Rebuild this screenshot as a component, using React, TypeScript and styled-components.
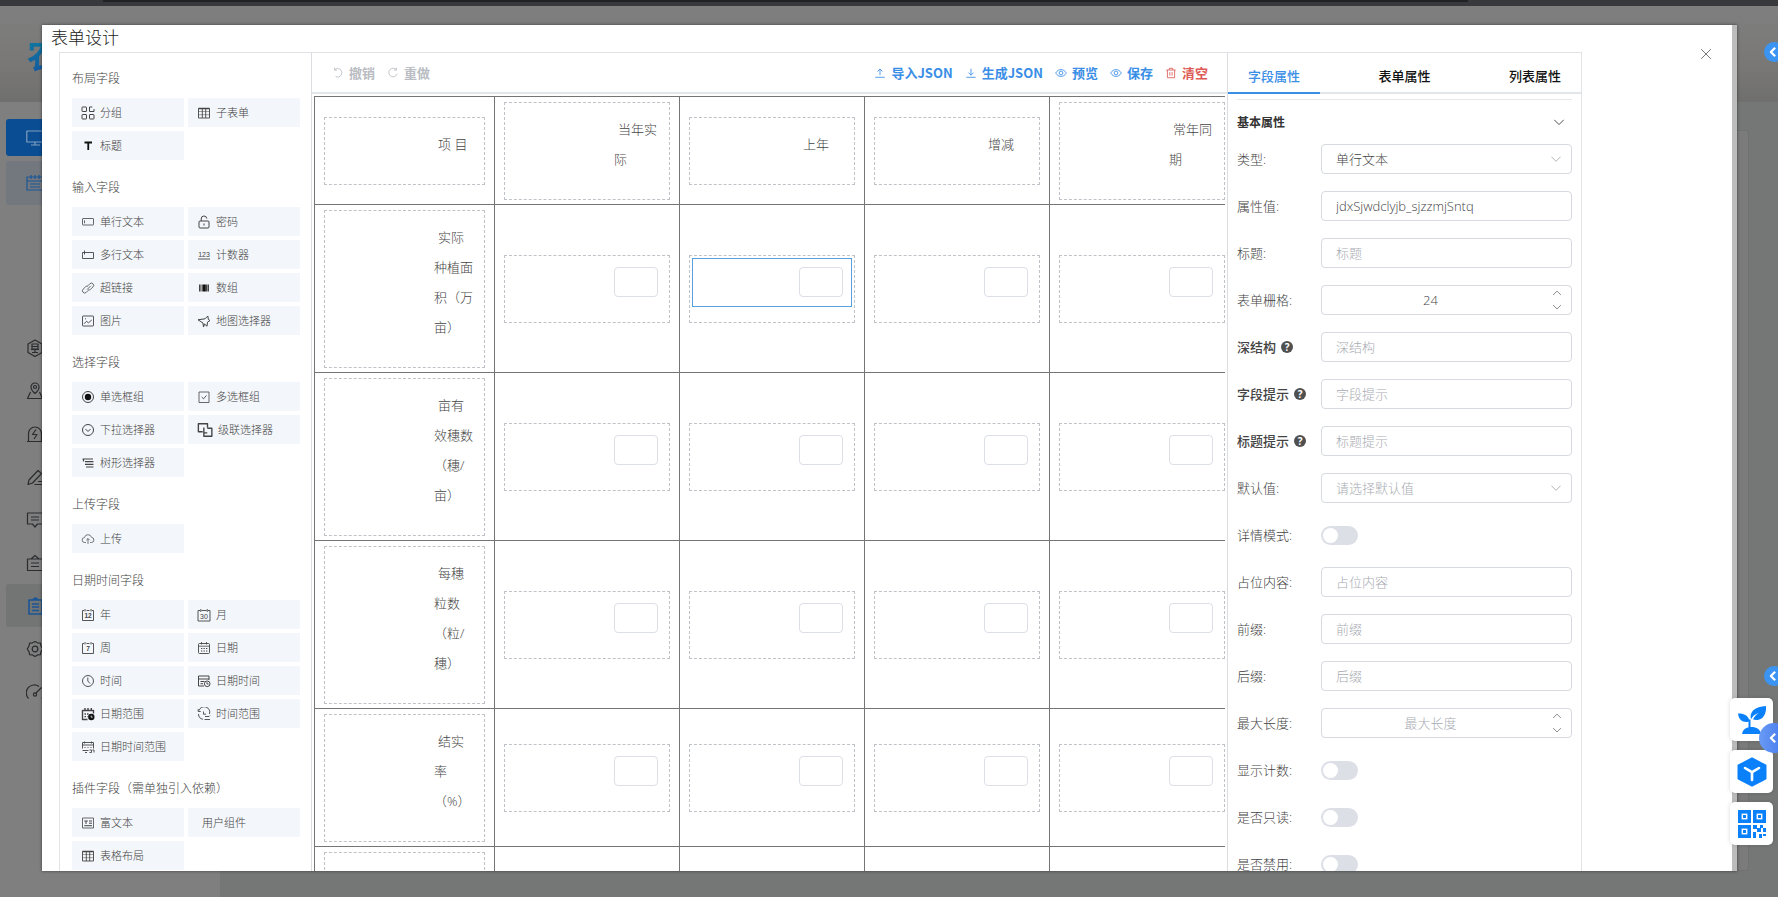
import React, { useState } from 'react';
import styled, { createGlobalStyle } from 'styled-components';

const BLUE = '#3a8ee6';

const GlobalStyle = createGlobalStyle`
  *, *::before, *::after { box-sizing: border-box; }
  html, body { margin: 0; height: 100%; overflow: hidden; background: #fff; }
  body, button, input, select {
    font-family: "Open Sans", "Noto Sans CJK SC", sans-serif;
    font-weight: 300;
  }
  button { border: 0; padding: 0; background: none; cursor: pointer; }
`;

/* ---------- dimmed page behind the dialog ---------- */

const Screen = styled.div`
  position: relative;
  height: 100vh;
  padding-bottom: 2px;
  overflow: hidden;
`;
const Backdrop = styled.div`
  display: flex;
  flex-direction: column;
  height: 100%;
  background: #757777;
`;
const BrowserStrip = styled.div`
  height: 6px;
  flex: none;
  padding: 0 310px 0 103px;
  background: #38393d;
  &::before { content: ''; display: block; height: 2px; background: #202226; }
`;
const Banner = styled.header`
  height: 96px;
  flex: none;
  padding: 29px 0 0 27px;
  background: linear-gradient(#7f7f7f, #797877 60%, #6f6f6d);
`;
const Brand = styled.span`
  font-size: 34px;
  line-height: 40px;
  font-weight: 700;
  color: transparent;
  background: linear-gradient(#0c7fa0, #17569f);
  background-clip: text;
`;
const BackBody = styled.div`
  display: flex;
  flex: 1;
  min-height: 0;
`;
const SideNav = styled.nav`
  width: 220px;
  padding: 17px 6px 0;
  background: #7f7f7f;
`;
const NavTile = styled.div<{ $tone?: 'primary' | 'sub' | 'active'; $h?: number }>`
  display: flex;
  align-items: center;
  height: ${p => p.$h ?? 43}px;
  padding-left: 20px;
  border-radius: 3px;
  color: ${p => (p.$tone === 'primary' ? '#7f9fc0' : p.$tone ? '#1b5697' : '#2b2c2e')};
  background: ${p =>
    p.$tone === 'primary' ? '#0b4d92' : p.$tone === 'sub' ? '#73787e' : p.$tone === 'active' ? '#727574' : 'none'};
`;
const NavGap = styled.div<{ $h: number }>`
  height: ${p => p.$h}px;
`;
const BackMain = styled.div`
  flex: 1;
  padding: 28px 29px 26px 20px;
  background: #757777;
`;
const BackCard = styled.div`
  height: 100%;
  border: 1px solid #707171;
  border-radius: 3px;
  background: #7b7b7b;
`;

/* ---------- dialog ---------- */

const Overlay = styled.div`
  position: absolute;
  inset: 0;
  padding: 25px 41px 28px 42px;
`;
const Dialog = styled.section`
  position: relative;
  display: flex;
  flex-direction: column;
  height: 100%;
  overflow: hidden;
  background: #fff;
  border-right: 5px solid #bcbcbc;
  box-shadow: 0 0 3px rgba(0, 0, 0, 0.5);
`;
const DialogTitle = styled.h1`
  flex: none;
  height: 27px;
  margin: 0;
  padding-left: 9px;
  font-size: 17px;
  line-height: 26px;
  font-weight: 300;
  color: #222;
`;
const CloseButton = styled.button`
  position: absolute;
  top: 22px;
  right: 19px;
  width: 14px;
  height: 14px;
  color: #777;
`;
const Editor = styled.div`
  display: flex;
  flex: 1;
  min-height: 0;
  margin: 0 150px 0 17px;
  border: 1px solid #e2e3e6;
  border-bottom: 0;
`;

/* ---------- field palette ---------- */

const Palette = styled.aside`
  flex: none;
  width: 252px;
  padding: 17px 11px 0 12px;
  overflow: hidden;
  border-right: 1px solid #dcdde0;
`;
const PaletteSection = styled.section`
  margin-bottom: 19px;
`;
const PaletteHeading = styled.h2`
  margin: 0 0 10px;
  font-size: 12px;
  line-height: 18px;
  font-weight: 300;
  white-space: nowrap;
  color: #444;
`;
const TileGrid = styled.div`
  display: grid;
  grid-template-columns: 1fr 1fr;
  grid-auto-rows: 29px;
  gap: 4px;
`;
const Tile = styled.button<{ $plain?: boolean }>`
  display: flex;
  align-items: center;
  gap: 5px;
  padding-left: ${p => (p.$plain ? 14 : 9)}px;
  font-size: 11px;
  line-height: 16px;
  white-space: nowrap;
  color: #444;
  background: #f3f6fa;
`;

/* ---------- canvas ---------- */

const Center = styled.main`
  display: flex;
  flex-direction: column;
  flex: 1;
  min-width: 0;
`;
const Toolbar = styled.div`
  display: flex;
  align-items: center;
  gap: 12px;
  flex: none;
  height: 41px;
  padding: 0 19px 0 20px;
  border-bottom: 2px solid #e4e7ea;
`;
const Spacer = styled.div`
  flex: 1;
`;
const ToolButton = styled.button<{ $color: string }>`
  display: flex;
  align-items: center;
  gap: 5px;
  font-family: "Noto Sans CJK SC", sans-serif;
  font-size: 13px;
  line-height: 20px;
  font-weight: 600;
  white-space: nowrap;
  color: ${p => p.$color};
`;
const Canvas = styled.div`
  flex: 1;
  min-height: 0;
  margin: 2px 2px 0;
  overflow: hidden;
`;
const FormTable = styled.table`
  width: 921px;
  table-layout: fixed;
  border-collapse: collapse;
`;
const FirstCol = styled.col`
  width: 180px;
`;
const Cell = styled.td`
  padding: 5px 9px 4px;
  border: 1px solid #757575;
  vertical-align: middle;
`;
const DropZone = styled.div`
  padding: 2px 2px 15px;
  border: 1px dashed #bfc3c8;
`;
const FieldItem = styled.div<{ $selected?: boolean }>`
  padding: 8px 8px 9px 106px;
  border: 1px solid ${p => (p.$selected ? '#5a9fe0' : 'transparent')};
`;
const CellText = styled.div<{ $lines?: number }>`
  min-height: ${p => (p.$lines ?? 1) * 30}px;
  font-size: 13px;
  line-height: 30px;
  text-indent: 4px;
  color: #444;
`;
const CellInput = styled.input`
  display: block;
  width: 100%;
  height: 30px;
  border: 1px solid #dcdfe6;
  border-radius: 4px;
  background: #fff;
`;

/* ---------- property panel ---------- */

const Props = styled.aside`
  flex: none;
  width: 354px;
  overflow: hidden;
  border-left: 1px solid #dcdde0;
`;
const Tabs = styled.div`
  display: flex;
  justify-content: space-between;
  height: 41px;
  background: linear-gradient(#e4e7ea, #e4e7ea) bottom / 100% 2px no-repeat;
`;
const Tab = styled.button<{ $active?: boolean }>`
  padding: 6px 20px 0;
  font-size: 13px;
  line-height: 20px;
  font-weight: 500;
  white-space: nowrap;
  color: ${p => (p.$active ? BLUE : '#111')};
  border-bottom: 2px solid ${p => (p.$active ? BLUE : 'transparent')};
`;
const PropBody = styled.div`
  padding: 5px 9px 0;
`;
const GroupHeader = styled.button`
  display: flex;
  align-items: center;
  justify-content: space-between;
  width: 100%;
  height: 45px;
  padding-right: 7px;
  border-top: 1px solid #e6e8eb;
  font-size: 12px;
  font-weight: 700;
  color: #333;
`;
const PropRow = styled.div`
  display: flex;
  align-items: center;
  height: 30px;
  margin-bottom: 17px;
`;
const PropLabel = styled.label<{ $strong?: boolean }>`
  display: flex;
  align-items: center;
  gap: 5px;
  flex: none;
  width: 84px;
  font-size: 13px;
  line-height: 20px;
  font-weight: ${p => (p.$strong ? 500 : 300)};
  white-space: nowrap;
  color: #444;
`;
const Control = styled.div`
  position: relative;
  flex: 1;
  height: 30px;
`;
const controlBox = `
  width: 100%;
  height: 30px;
  border: 1px solid #d6d9df;
  border-radius: 4px;
  background: #fff;
  font-size: 13px;
  outline: none;
`;
const TextBox = styled.input<{ $centered?: boolean }>`
  ${controlBox}
  padding: 0 ${p => (p.$centered ? 46 : 14)}px 0 14px;
  text-align: ${p => (p.$centered ? 'center' : 'left')};
  color: #444;
  &::placeholder { color: #a8abb2; opacity: 1; }
`;
const SelectBox = styled.select<{ $muted?: boolean }>`
  ${controlBox}
  appearance: none;
  padding: 0 30px 0 14px;
  color: ${p => (p.$muted ? '#a8abb2' : '#444')};
`;
const SelectArrow = styled.span`
  position: absolute;
  inset: 0 9px 0 auto;
  display: flex;
  align-items: center;
  color: #b0b3b9;
  pointer-events: none;
`;
const Steppers = styled.div`
  position: absolute;
  top: 1px;
  right: 9px;
  display: flex;
  flex-direction: column;
  width: 12px;
  color: #777;
`;
const StepButton = styled.button`
  display: grid;
  place-items: center;
  height: 14px;
  color: inherit;
`;
const Switch = styled.input`
  appearance: none;
  display: block;
  width: 37px;
  height: 19px;
  margin: 6px 0 0;
  padding: 2px;
  border-radius: 10px;
  background: #dcdfe6;
  cursor: pointer;
  &::before {
    content: '';
    display: block;
    width: 15px;
    height: 15px;
    border-radius: 50%;
    background: #fff;
  }
  &:checked { background: ${BLUE}; }
  &:checked::before { margin-left: auto; }
`;
const HelpMark = styled.span`
  display: grid;
  place-items: center;
  width: 12px;
  height: 12px;
  border-radius: 50%;
  font-size: 10px;
  line-height: 12px;
  font-weight: 700;
  color: #fff;
  background: #505050;
`;

/* ---------- floating shortcuts ---------- */

const FloatStack = styled.div`
  position: absolute;
  right: 5px;
  top: 698px;
  display: grid;
  gap: 9px;
`;
const FloatButton = styled.button`
  display: grid;
  place-items: center;
  width: 43px;
  height: 43px;
  border-radius: 5px;
  color: #0b80fb;
  background: #fff;
  box-shadow: 0 0 4px rgba(0, 0, 0, 0.15);
`;
const EdgeKnob = styled.button<{ $top: number; $size: number; $fill: string }>`
  position: absolute;
  top: ${p => p.$top}px;
  right: ${p => 4 - p.$size / 2}px;
  display: grid;
  place-items: center;
  width: ${p => p.$size}px;
  height: ${p => p.$size}px;
  padding-right: 2px;
  border-radius: 50%;
  color: #fff;
  background: ${p => p.$fill};
`;

/* ---------- icons, drawn on a 14px grid ---------- */

const Svg = ({ size = 14, w = 1, box = 14, children }: { size?: number; w?: number; box?: number; children: React.ReactNode }) => (
  <svg width={size} height={size} viewBox={`0 0 ${box} ${box}`} fill="none" stroke="currentColor" strokeWidth={w} strokeLinejoin="round" aria-hidden="true">
    {children}
  </svg>
);
const svgText = { fill: 'currentColor', stroke: 'none', textAnchor: 'middle' as const, fontFamily: 'Liberation Sans', fontWeight: 700 };

const glyphs: Record<string, React.ReactNode> = {
  group: <><rect x="1" y="1" width="4.500" height="4.500" rx=".5" /><path d="M13 3v2.500H8.500V1h2.800" /><rect x="1" y="8.500" width="4.500" height="4.500" rx=".5" /><rect x="8.500" y="8.500" width="4.500" height="4.500" rx=".5" /></>,
  table: <><path d="M1.500 2.500h11v9.500h-11zM5.300 3V12M8.700 3V12" strokeWidth=".9" /><path d="M1.500 5.500h11M1.500 8.700h11" strokeWidth=".5" /><path d="M1.500 2.500h11" strokeWidth="1.500" /></>,
  title: <path d="M3.500 3.500h7.500M7.250 3.500V11" stroke="#111" strokeWidth="1.800" />,
  input: <><rect x="1.500" y="3.500" width="11" height="6.500" rx=".5" strokeWidth=".8" /><path d="M3.500 5.300v3" strokeWidth=".8" /></>,
  lock: <><rect x="2" y="6" width="10" height="7" rx="1" /><path d="M4.200 6V4a2.800 2.800 0 0 1 5.600-.4M7 8.500v2" /></>,
  textarea: <path d="M5 4.500h7.500v6h-11V6.500M3.500 2.500V6.500M1.500 4.500h3.500M1.500 6.500V4.500" strokeWidth=".9" />,
  number: <><text x="7" y="9" fontSize="7" {...svgText} fontWeight={400}>123</text><path d="M1 11h12" strokeWidth=".9" /></>,
  link: <path d="M6 8.600 9.800 4.800M6.800 4.800l2-2a2.200 2.200 0 0 1 3.200 3.100l-2.600 2.500a2 2 0 0 1-2.200.4M7.300 9.300l-2 2a2.200 2.200 0 0 1-3.200-3.100l2.600-2.500a2 2 0 0 1 2.200-.4" strokeWidth=".8" />,
  array: <><path d="M2.800 3.500v7M11.200 3.500v7" strokeWidth="1.600" /><path d="M5 3.500v7M9.500 3.500v7" strokeWidth="1" /><path d="M7.200 3.500v7" stroke="#111" strokeWidth="3.200" /></>,
  image: <><rect x="1.500" y="2" width="11" height="10" rx=".5" strokeWidth=".9" /><path d="m3 9.800 2.500-2.500 2 1.500L10.800 6M4 4.800h1" strokeWidth=".9" /></>,
  pin: <path d="M1 5.800 8 4.800 10.800 2l.6 3.500L13 6.500l-2.500 1.700-.5 4L7.500 10 6.500 13 6 9z" />,
  radio: <><circle cx="7" cy="7" r="5.500" /><circle cx="7" cy="7" r="3.200" fill="#111" stroke="none" /></>,
  check: <><rect x="2" y="2" width="10" height="10.500" strokeWidth=".8" /><path d="m4.700 7 1.800 1.800L9.500 5.500" strokeWidth=".9" /></>,
  dropdown: <><circle cx="7" cy="7" r="5.500" /><path d="m4.500 6 2.500 2.500L9.500 6" /></>,
  cascade: <><path d="M5 8.500H1.200V1.500h8V5" strokeWidth="1.200" /><path d="M9 9.500H6V4.800M9 5.500h4v7H6V9.500" strokeWidth="1.200" /></>,
  tree: <path d="M1.500 3h10.500M4 5.700h8.500M4 8.300h8.500M5 11h7.500M2.500 3v2.500" strokeWidth="1.200" />,
  upload: <path d="M5 10.500H3.800a2.500 2.500 0 0 1-.3-5 3.600 3.600 0 0 1 7-.1 2.500 2.500 0 0 1-.3 5.100H9M7 12V6.500M5.300 8.200 7 6.500l1.700 1.700" strokeWidth=".7" />,
  year: <><path d="M3 2.500H1.500v10h11v-10H11M5.500 2.500h3M4 1v2.500M10 1v2.500" strokeWidth=".9" /><text x="7" y="10.300" fontSize="6.500" {...svgText}>12</text></>,
  month: <><path d="M3 2.500H1v10.500h12V2.500h-2M4.500 2.500h5M3.800 1v3M10.200 1v3" strokeWidth=".9" /><text x="7" y="10.500" fontSize="7" {...svgText} fontWeight={400}>30</text></>,
  week: <><path d="M3 2.500H1.500v10h11v-10H11M5.500 2.500h3M4 1v2.500M10 1v2.500" strokeWidth=".9" /><text x="7" y="10.300" fontSize="6.500" {...svgText}>7</text></>,
  date: <><rect x="1.500" y="2.500" width="11" height="10" rx="1" strokeWidth=".9" /><path d="M1.500 5.200h11M4.500 1v2.500M9.500 1v2.500" strokeWidth=".8" /><path d="M4 7.500h6.500M4 10h6.500" strokeDasharray="1.300 1.200" /></>,
  clock: <><circle cx="7" cy="7" r="5.500" strokeWidth=".9" /><path d="M6.800 3.500V7l2.200 2.500" strokeWidth=".9" /></>,
  datetime: <><path d="M12 6V2H1.500v3H12M1.500 5v7H7M3.500 7.500h4M3.500 9.700h2.500" /><circle cx="10.200" cy="9.800" r="2.800" /><path d="M10 8.300v1.700h1.500" /></>,
  daterange: <><path d="M1.500 3.500h11M1.500 3v9.500h5M12.500 3v3.500" strokeWidth="1.400" /><path d="M4 1v3M7 1v3M10.300 1v3" strokeWidth="1.400" /><path d="M3.500 7h5M3.500 9.700h3" strokeWidth="1.300" strokeDasharray="1.500 1" /><circle cx="10.300" cy="10" r="3.200" fill="#111" stroke="none" /><path d="M10.200 8.500v1.700h1.500" stroke="#f3f6fa" strokeWidth=".8" /></>,
  timerange: <path d="M2 3.500A5.500 5.500 0 0 1 12.500 7M1.200 2v2.500h2.500M1.500 7a5.500 5.500 0 0 0 4.500 5.300M6.500 4.500v2.700H9M8 9.500h4M12 9.500l1-1M7.500 12.500H13" strokeWidth=".9" />,
  dtrange: <><path d="M1.500 8.500v-6h11v6M1.500 5h11M3.500 1.500v2M10.500 1.500v2" strokeWidth=".9" /><path d="M3.500 7.500h1M6.500 7.500h1M9.500 7.500h1M1.500 10.500h6M4 12.500h2M8.500 10h2v2.500h-2M11.500 10h1.500v2.500" strokeWidth=".9" /></>,
  rich: <><rect x="1.500" y="2" width="11" height="10" strokeWidth=".8" /><path d="M3.300 5h3.500M5 5v3M8 5h3M8 7.200h3M3.300 9.700h7.700" /></>,
  undo: <path d="M3 3.200A5 5 0 1 1 4.200 11.200M3 .8v2.800h2.800" />,
  redo: <path d="M11 3.200A5 5 0 1 0 11.900 8M11 .8v2.800H8.200" />,
  up: <path d="M7 9.500V2.500M4 5.300l3-3 3 3M1.500 12h11" />,
  down: <path d="M7 2v7.500M4 6.500l3 3 3-3M1.500 12h11" />,
  eye: <><path d="M.8 7C2.500 4.200 4.600 3 7 3s4.500 1.200 6.200 4C11.500 9.800 9.400 11 7 11S2.500 9.800.8 7z" /><circle cx="7" cy="7" r="2.200" /></>,
  trash: <path d="M1.500 3.500h11M5 3.300V1.500h4v1.800M2.800 3.500V12.500h8.400V3.500M5.700 6v4M8.300 6v4" />,
};
const Icon = ({ name, size = 14 }: { name: string; size?: number }) => <Svg size={size}>{glyphs[name]}</Svg>;

const navGlyphs: React.ReactNode[] = [
  <><path d="M9 1 16 5v8.500L9 17.500 2 13.500V5z" /><path d="M6 5h6v5H6zM6 7.500h6M9 10v3.500M5 10.500h8M6 13.500h6" /></>,
  <><path d="M9 11.500S5 8 5 5a4 4 0 0 1 8 0c0 3-4 6.500-4 6.500zM4.500 10 1.500 16.500h15L13.500 10" /><circle cx="9" cy="5" r="1.500" /></>,
  <><path d="M2.500 16V8.500a6.500 6.500 0 0 1 13 0V16M1 16.500h16M10 4.500 6.500 9.500h4.500L8 14" /></>,
  <><path d="M2 16.500 3 12 12 2.500l3.500 3L6.500 15zM8.500 16.500h8M12 13.500h5" /></>,
  <><path d="M1.500 2h15v11h-5L9 16l-2.500-3h-5zM5 6h8M5 9h8" /></>,
  <><path d="M1.500 5h15v11.500h-15zM5 5l4-3.500L13 5M5 9h8M5 12.500h8" /></>,
  <><path d="M3 3h13v14H3zM6.500 3l3-2 3 2M6 7h7M6 10h7M6 13.500h7" strokeWidth="1.600" /></>,
  <><path d="m9 1.500 2.500 1.300 2.900.3.600 2.900L16.700 9 15 11.700l-.6 2.900-2.900.3L9 16.500l-2.500-1.600-2.900-.3L3 11.700 1.300 9 3 6l.6-2.900 2.900-.3z" /><circle cx="9" cy="9" r="2.800" /></>,
  <><path d="M2.500 15.500A8 8 0 0 1 13 3.500M16.500 8.500a8 8 0 0 1-.5 7M9.500 10.500l6-6" /><circle cx="9" cy="11.500" r="1.600" /></>,
];
const NavIcon = ({ children }: { children: React.ReactNode }) => <Svg size={18} box={18} w={1.2}>{children}</Svg>;

const Chevron = ({ dir = 'down', size = 14 }: { dir?: 'down' | 'up' | 'left'; size?: number }) => (
  <Svg size={size} w={dir === 'left' ? 2.6 : 1}>
    <path d={dir === 'down' ? 'M2.500 4.800 7 9.300l4.500-4.500' : dir === 'up' ? 'M2.500 9.300 7 4.800l4.500 4.500' : 'M9.500 2 4.500 7l5 5'} />
  </Svg>
);

/* ---------- data ---------- */

const palette: { title: string; items: [string, string][] }[] = [
  { title: '布局字段', items: [['group', '分组'], ['table', '子表单'], ['title', '标题']] },
  { title: '输入字段', items: [['input', '单行文本'], ['lock', '密码'], ['textarea', '多行文本'], ['number', '计数器'], ['link', '超链接'], ['array', '数组'], ['image', '图片'], ['pin', '地图选择器']] },
  { title: '选择字段', items: [['radio', '单选框组'], ['check', '多选框组'], ['dropdown', '下拉选择器'], ['cascade', '级联选择器'], ['tree', '树形选择器']] },
  { title: '上传字段', items: [['upload', '上传']] },
  { title: '日期时间字段', items: [['year', '年'], ['month', '月'], ['week', '周'], ['date', '日期'], ['clock', '时间'], ['datetime', '日期时间'], ['daterange', '日期范围'], ['timerange', '时间范围'], ['dtrange', '日期时间范围']] },
  { title: '插件字段（需单独引入依赖）', items: [['rich', '富文本'], ['', '用户组件'], ['table', '表格布局']] },
];
const columns = ['项 目', '当年实际', '上年', '增减', '常年同期'];
const rows = ['实际种植面积（万亩）', '亩有效穗数（穗/亩）', '每穗粒数（粒/穗）', '结实率（%）', ''];

type Prop = { label: string; kind: 'text' | 'select' | 'number' | 'switch'; value?: string; hint?: string; help?: boolean };
const fields: Prop[] = [
  { label: '类型', kind: 'select', value: '单行文本' },
  { label: '属性值', kind: 'text', value: 'jdxSjwdclyjb_sjzzmjSntq' },
  { label: '标题', kind: 'text', hint: '标题' },
  { label: '表单栅格', kind: 'number', value: '24' },
  { label: '深结构', kind: 'text', hint: '深结构', help: true },
  { label: '字段提示', kind: 'text', hint: '字段提示', help: true },
  { label: '标题提示', kind: 'text', hint: '标题提示', help: true },
  { label: '默认值', kind: 'select', hint: '请选择默认值' },
  { label: '详情模式', kind: 'switch' },
  { label: '占位内容', kind: 'text', hint: '占位内容' },
  { label: '前缀', kind: 'text', hint: '前缀' },
  { label: '后缀', kind: 'text', hint: '后缀' },
  { label: '最大长度', kind: 'number', hint: '最大长度' },
  { label: '显示计数', kind: 'switch' },
  { label: '是否只读', kind: 'switch' },
  { label: '是否禁用', kind: 'switch' },
];

/* ---------- parts ---------- */

function PropField({ field, id }: { field: Prop; id: string }) {
  return (
    <PropRow>
      <PropLabel htmlFor={id} $strong={field.help}>
        {field.help ? <>{field.label}<HelpMark>?</HelpMark></> : `${field.label}:`}
      </PropLabel>
      <Control>
        {field.kind === 'text' && <TextBox id={id} defaultValue={field.value} placeholder={field.hint} />}
        {field.kind === 'select' && (
          <>
            <SelectBox id={id} $muted={!field.value}><option>{field.value ?? field.hint}</option></SelectBox>
            <SelectArrow><Chevron /></SelectArrow>
          </>
        )}
        {field.kind === 'number' && (
          <>
            <TextBox id={id} $centered inputMode="numeric" defaultValue={field.value} placeholder={field.hint} />
            <Steppers>
              <StepButton type="button"><Chevron dir="up" size={12} /></StepButton>
              <StepButton type="button"><Chevron size={12} /></StepButton>
            </Steppers>
          </>
        )}
        {field.kind === 'switch' && <Switch id={id} type="checkbox" role="switch" />}
      </Control>
    </PropRow>
  );
}

function DesignTable() {
  const [selected, setSelected] = useState('0-2');
  return (
    <FormTable>
      <colgroup><FirstCol />{columns.slice(1).map(c => <col key={c} />)}</colgroup>
      <tbody>
        <tr>
          {columns.map((c, i) => (
            <Cell key={c}><DropZone><FieldItem><CellText id={`col-${i}`}>{c}</CellText></FieldItem></DropZone></Cell>
          ))}
        </tr>
        {rows.map((r, ri) => (
          <tr key={ri}>
            <Cell><DropZone><FieldItem><CellText id={`row-${ri}`} $lines={r ? 1 : 4}>{r}</CellText></FieldItem></DropZone></Cell>
            {columns.slice(1).map((c, ci) => (
              <Cell key={c}>
                <DropZone>
                  <FieldItem $selected={selected === `${ri}-${ci + 1}`} onClick={() => setSelected(`${ri}-${ci + 1}`)}>
                    <CellInput aria-labelledby={`row-${ri} col-${ci + 1}`} />
                  </FieldItem>
                </DropZone>
              </Cell>
            ))}
          </tr>
        ))}
      </tbody>
    </FormTable>
  );
}

export default function App() {
  return (
    <Screen>
      <GlobalStyle />
      <Backdrop>
        <BrowserStrip />
        <Banner><Brand>农</Brand></Banner>
        <BackBody>
          <SideNav>
            <NavTile $tone="primary" $h={37}><NavIcon><path d="M.8 2h17v11H.8zM9 13v3M5 16h9" /></NavIcon></NavTile>
            <NavGap $h={5} />
            <NavTile $tone="sub" $h={44}><NavIcon><path d="M1 3h16v13H1zM1 7h16M5 1v4M9 1v4M13 1v4M4 10h10M4 13h10" /></NavIcon></NavTile>
            <NavGap $h={121} />
            {navGlyphs.map((g, i) => (
              <NavTile key={i} $tone={i === 6 ? 'active' : undefined}><NavIcon>{g}</NavIcon></NavTile>
            ))}
          </SideNav>
          <BackMain><BackCard /></BackMain>
        </BackBody>
      </Backdrop>

      <Overlay>
        <Dialog role="dialog" aria-labelledby="dialog-title">
          <DialogTitle id="dialog-title">表单设计</DialogTitle>
          <CloseButton type="button"><Svg><path d="m2.200 2.200 9.600 9.600M11.800 2.200 2.200 11.800" /></Svg></CloseButton>
          <Editor>
            <Palette>
              {palette.map(s => (
                <PaletteSection key={s.title}>
                  <PaletteHeading>{s.title}</PaletteHeading>
                  <TileGrid>
                    {s.items.map(([icon, label]) => (
                      <Tile key={label} type="button" $plain={!icon}>
                        {icon && <Icon name={icon} size={icon === 'cascade' ? 16 : 14} />}
                        {label}
                      </Tile>
                    ))}
                  </TileGrid>
                </PaletteSection>
              ))}
            </Palette>

            <Center>
              <Toolbar>
                <ToolButton type="button" $color="#b9bcc2"><Icon name="undo" size={12} />撤销</ToolButton>
                <ToolButton type="button" $color="#b9bcc2"><Icon name="redo" size={12} />重做</ToolButton>
                <Spacer />
                <ToolButton type="button" $color={BLUE}><Icon name="up" size={12} />导入JSON</ToolButton>
                <ToolButton type="button" $color={BLUE}><Icon name="down" size={12} />生成JSON</ToolButton>
                <ToolButton type="button" $color={BLUE}><Icon name="eye" size={12} />预览</ToolButton>
                <ToolButton type="button" $color={BLUE}><Icon name="eye" size={12} />保存</ToolButton>
                <ToolButton type="button" $color="#dd5b56"><Icon name="trash" size={12} />清空</ToolButton>
              </Toolbar>
              <Canvas><DesignTable /></Canvas>
            </Center>

            <Props>
              <Tabs role="tablist">
                <Tab type="button" role="tab" $active>字段属性</Tab>
                <Tab type="button" role="tab">表单属性</Tab>
                <Tab type="button" role="tab">列表属性</Tab>
              </Tabs>
              <PropBody>
                <GroupHeader type="button">基本属性<Svg size={12}><path d="M1.500 4.500 7 10l5.500-5.500" /></Svg></GroupHeader>
                {fields.map((f, i) => <PropField key={f.label} field={f} id={`prop-${i}`} />)}
              </PropBody>
            </Props>
          </Editor>
        </Dialog>
      </Overlay>

      <FloatStack>
        <FloatButton type="button">
          <svg width="30" height="30" viewBox="0 0 30 30" fill="currentColor" aria-hidden="true">
            <path d="M29 1c.6 8-3 13.500-8.500 14-2 .2-3.500-.2-4.500-.8 1.500-3 3.500-5 6-6.500-4 1.300-6.500 3.500-8 6.500C12 7 18 1.500 29 1z" />
            <path d="M1 8.500c5.500-.3 10.500 2 11.500 7.500-.8.900-2 1-3 1C4.500 17 1.500 13.500 1 8.500z" />
            <path d="M11.500 14.500h2V23h-2z" />
            <path d="M5 29c.5-4.500 4.500-7 9.500-7s9 2.500 9.500 7z" />
          </svg>
        </FloatButton>
        <FloatButton type="button">
          <svg width="30" height="30" viewBox="0 0 30 30" aria-hidden="true">
            <path d="M15 1.500 28.500 8.500v13L15 28.500 1.500 21.500v-13z" fill="currentColor" stroke="currentColor" strokeWidth="2" strokeLinejoin="round" />
            <path d="m8 11 7 4.200 7-4.200M15 15.200V23" fill="none" stroke="#fff" strokeWidth="2.600" strokeLinecap="round" />
          </svg>
        </FloatButton>
        <FloatButton type="button">
          <svg width="28" height="28" viewBox="0 0 28 28" aria-hidden="true">
            <g fill="none" stroke="currentColor" strokeWidth="3.600">
              <rect x="1.800" y="1.800" width="9.400" height="9.400" /><rect x="16.800" y="1.800" width="9.400" height="9.400" /><rect x="1.800" y="16.800" width="9.400" height="9.400" />
            </g>
            <path fill="currentColor" d="M5 5h3v3H5zM20 5h3v3h-3zM5 20h3v3H5zM15 15h4v4h-4zM22 15h3v3h-3zM19 18h4v4h-4zM15 22h3v6h-3zM25 18h3v4h-3zM21 24h3v4h-3zM25 24h3v2h-3z" />
          </svg>
        </FloatButton>
      </FloatStack>
      <EdgeKnob type="button" $top={42} $size={20} $fill="#3b93f2"><Chevron dir="left" size={12} /></EdgeKnob>
      <EdgeKnob type="button" $top={666} $size={20} $fill="#3b93f2"><Chevron dir="left" size={12} /></EdgeKnob>
      <EdgeKnob type="button" $top={723} $size={30} $fill="linear-gradient(90deg, #6a9bf5, #3f74ec)"><Chevron dir="left" size={12} /></EdgeKnob>
    </Screen>
  );
}
